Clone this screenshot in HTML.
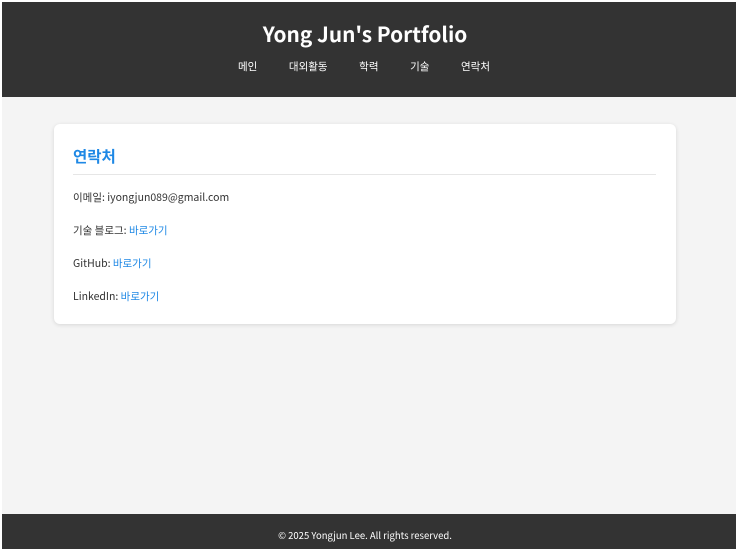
<!DOCTYPE html>
<html><head><meta charset="utf-8"><style>
*{margin:0;padding:0;box-sizing:border-box}
html,body{width:738px;height:549px;overflow:hidden;background:#fff}
body{font-family:"Noto Sans CJK KR","Liberation Sans",sans-serif;position:relative}
.page{position:absolute;left:2px;top:2px;width:734px;height:547px;background:#f4f4f4;overflow:hidden}
header{position:absolute;left:0;top:0;width:734px;height:95px;background:#333;color:#fff;text-align:center}
h1{position:absolute;top:14px;left:-4px;width:100%;font-size:20.8px;font-weight:700;line-height:34px}
nav{position:absolute;top:57px;left:-5px;width:100%;font-size:10.5px;line-height:16px}
nav span{margin:0 15.8px}
.card{position:absolute;left:52px;top:122px;width:622px;height:200px;background:#fff;border-radius:6px;box-shadow:0 1px 4px rgba(0,0,0,.12)}
h2{position:absolute;left:19px;top:21px;width:583px;font-size:15.5px;color:#1e88e5;font-weight:700;line-height:22px;padding-bottom:7px;border-bottom:1px solid #e6e6e6}
p{position:absolute;left:19px;font-size:10.5px;color:#333;line-height:16px}
a{color:#1e88e5;text-decoration:none}
footer{position:absolute;left:0;top:512px;width:734px;height:37px;background:#333;color:#fff;font-size:9.5px;line-height:16px;padding-top:13px}
footer span{position:absolute;left:-4px;width:734px;text-align:center}
</style></head><body><div class="page">
<header><h1>Yong Jun's Portfolio</h1><nav><span>메인</span><span>대외활동</span><span>학력</span><span>기술</span><span>연락처</span></nav></header>
<div class="card"><h2>연락처</h2>
<p style="top:66px">이메일: iyongjun089@gmail.com</p>
<p style="top:99px">기술 블로그: <a>바로가기</a></p>
<p style="top:132px">GitHub: <a>바로가기</a></p>
<p style="top:165px">LinkedIn: <a>바로가기</a></p>
</div>
<footer><span>© 2025 Yongjun Lee. All rights reserved.</span></footer>
</div></body></html>
